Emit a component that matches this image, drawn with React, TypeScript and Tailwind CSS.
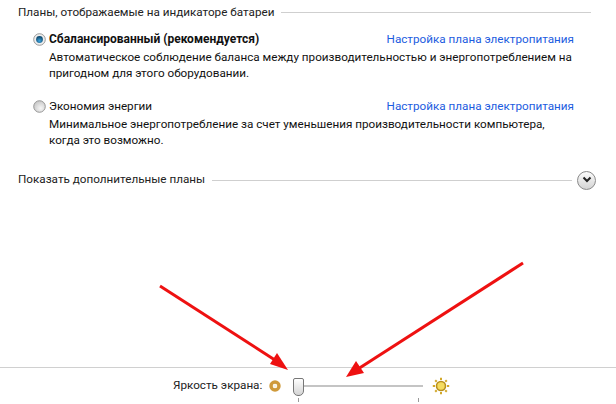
import React from 'react';

function Radio({ checked }: { checked?: boolean }) {
  return (
    <svg width="13" height="13" viewBox="0 0 13 13">
      <defs>
        <radialGradient id="off" cx="0.6" cy="0.65" r="0.7"><stop offset="0" stopColor="#f6f6f6" /><stop offset="1" stopColor="#c4c4c4" /></radialGradient>
        <radialGradient id="dot" cx="0.5" cy="0.7" r="0.6"><stop offset="0" stopColor="#3fa6e0" /><stop offset="1" stopColor="#0f4a70" /></radialGradient>
      </defs>
      <circle cx="6.5" cy="6.5" r="5.8" fill={checked ? '#eeeeee' : 'url(#off)'} stroke="#8f8f8f" strokeWidth="0.9" />
      {checked && <circle cx="6.5" cy="6.5" r="3.4" fill="url(#dot)" />}
    </svg>
  );
}

function Plan({ name, bold, desc, checked }: { name: string; bold?: boolean; desc: string[]; checked?: boolean }) {
  return (
    <div className="flex">
      <div className="w-[16px] pt-[3px] shrink-0">
        <Radio checked={checked} />
      </div>
      <div className="flex-1 min-w-0">
        <div className="flex justify-between h-[19px] leading-[19px]">
          <span className={`${bold ? 'font-bold text-[12px]' : ''} text-[#111]`}>{name}</span>
          <span className="text-[#1c5ce0]">Настройка плана электропитания</span>
        </div>
        {desc.map(d => <div key={d} className="h-[16px] leading-[16px] text-[#111] whitespace-nowrap">{d}</div>)}
      </div>
    </div>
  );
}

export default function App() {
  return (
    <div className="font-['Roboto',sans-serif] relative w-[616px] h-[404px] bg-white text-[11.7px] flex flex-col overflow-hidden">
      <div className="flex-1 pt-[4px] pl-[18px] pr-[20px]">
        <div className="flex items-center gap-[7px] h-[17px] pr-[5px]">
          <span className="text-[#222]">Планы, отображаемые на индикаторе батареи</span>
          <div className="flex-1 h-px bg-[#cfcfcf]" />
        </div>
        <div className="pl-[15px] pr-[22px] mt-[9px] flex flex-col gap-[16px]">
          <Plan name="Сбалансированный (рекомендуется)" bold checked desc={['Автоматическое соблюдение баланса между производительностью и энергопотреблением на', 'пригодном для этого оборудовании.']} />
          <Plan name="Экономия энергии" desc={['Минимальное энергопотребление за счет уменьшения производительности компьютера,', 'когда это возможно.']} />
        </div>
        <div className="flex items-center gap-[5px] mt-[22px] h-[20px]">
          <span className="text-[#222]">Показать дополнительные планы</span>
          <div className="flex-1 h-px bg-[#cfcfcf] ml-[2px]" />
          <div className="w-[19px] h-[19px] rounded-full border border-[#8a8a8a] bg-gradient-to-b from-[#fbfbfb] to-[#d4d4d4] flex items-center justify-center">
            <svg width="10" height="8" viewBox="0 0 10 8"><path d="M1.5 1.5 L5 5 L8.5 1.5" fill="none" stroke="#222" strokeWidth="2" /></svg>
          </div>
        </div>
      </div>
      <div className="h-[37px] border-t border-[#d0d0d0] bg-white flex items-center pl-[173px]">
        <span className="text-[#222]">Яркость экрана:</span>
        <svg className="ml-[7px]" width="12" height="12" viewBox="0 0 12 12"><circle cx="6" cy="6" r="4" fill="none" stroke="#cf9a3a" strokeWidth="3.4" /><circle cx="6" cy="6" r="1.8" fill="#f7f1dc" /></svg>
        <div className="ml-[12px] w-[130px] h-[2px] bg-[#c4c4c4] relative">
          <div className="absolute left-[0px] -top-[7px] w-[11px] h-[18px] bg-gradient-to-b from-white to-[#d4d4d4] border border-[#777] rounded-t-[2px] rounded-b-[5px]" />
          <div className="absolute left-[5px] top-[13px] w-px h-[4px] bg-[#999]" />
          <div className="absolute left-[125px] top-[13px] w-px h-[4px] bg-[#999]" />
        </div>
        <svg className="ml-[9px]" width="18" height="18" viewBox="0 0 18 18"><circle cx="9" cy="9" r="4.5" fill="#f5dc60" stroke="#b8901f" strokeWidth="1.6" />{[0, 45, 90, 135, 180, 225, 270, 315].map(a => <line key={a} x1="9" y1="3" x2="9" y2="0.8" stroke="#d2a82a" strokeWidth="2" transform={`rotate(${a} 9 9)`} />)}</svg>
      </div>
      <svg className="absolute left-0 top-0 pointer-events-none" width="616" height="404">
        <line x1="160" y1="286" x2="278" y2="362" stroke="#ee1111" strokeWidth="3" />
        <polygon points="288,370 270,364 277,353" fill="#ee1111" />
        <line x1="523" y1="263" x2="358" y2="369" stroke="#ee1111" strokeWidth="3" />
        <polygon points="346,377 356,361 364,373" fill="#ee1111" />
      </svg>
    </div>
  );
}
